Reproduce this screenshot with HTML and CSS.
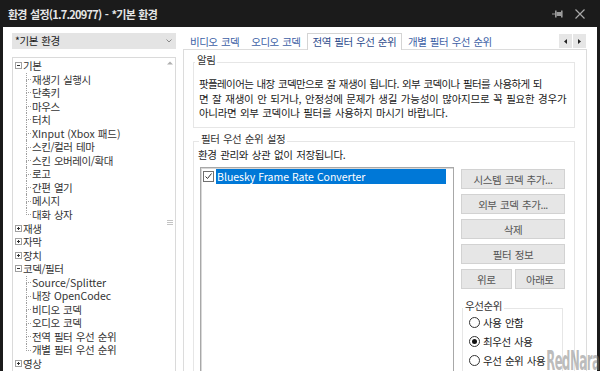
FILE: index.html
```html
<!DOCTYPE html>
<html lang="ko">
<head>
<meta charset="utf-8">
<title>환경 설정</title>
<link rel="stylesheet" href="styles.css">
</head>
<body>
<div class="window">
  <div class="titlebar">
    <span class="title">환경 설정(1.7.20977) - *기본 환경</span>
    <span class="tb-icons">
      <svg class="pin" width="11" height="8" viewBox="0 0 11 8"><path d="M0 4h3" stroke="#9a9a9a" stroke-width="1"/><rect x="3" y="0.5" width="1.6" height="7" fill="#9a9a9a"/><rect x="4.5" y="2" width="4.5" height="4" fill="#9a9a9a"/><rect x="9" y="0.5" width="1.6" height="7" fill="#9a9a9a"/></svg>
      <svg class="close" width="10" height="10" viewBox="0 0 10 10"><path d="M0.5 0.5L9.5 9.5M9.5 0.5L0.5 9.5" stroke="#a8a8a8" stroke-width="1.2"/></svg>
    </span>
  </div>
  <div class="client">
    <div class="left">
      <div class="combo"><span>*기본 환경</span><svg width="6" height="4" viewBox="0 0 6 4"><path d="M0.5 0.5L3 3L5.5 0.5" fill="none" stroke="#8a8a8a" stroke-width="1"/></svg></div>
      <div class="tree">
        <div class="tree-items">
          <div class="row root"><svg class="exp" width="7" height="7" viewBox="0 0 7 7"><rect x="0.5" y="0.5" width="6" height="6" fill="#fff" stroke="#a0a0a0"/><path d="M2 3.5h3" stroke="#333"/></svg><span class="rt">기본</span></div>
          <div class="row child"><span class="br"><i></i><i></i></span><span class="ct">재생기 실행시</span></div>
          <div class="row child"><span class="br"><i></i><i></i></span><span class="ct">단축키</span></div>
          <div class="row child"><span class="br"><i></i><i></i></span><span class="ct">마우스</span></div>
          <div class="row child"><span class="br"><i></i><i></i></span><span class="ct">터치</span></div>
          <div class="row child"><span class="br"><i></i><i></i></span><span class="ct lt">XInput (Xbox 패드)</span></div>
          <div class="row child"><span class="br"><i></i><i></i></span><span class="ct">스킨/컬러 테마</span></div>
          <div class="row child"><span class="br"><i></i><i></i></span><span class="ct">스킨 오버레이/확대</span></div>
          <div class="row child"><span class="br"><i></i><i></i></span><span class="ct">로고</span></div>
          <div class="row child"><span class="br"><i></i><i></i></span><span class="ct">간편 열기</span></div>
          <div class="row child"><span class="br"><i></i><i></i></span><span class="ct">메시지</span></div>
          <div class="row child last"><span class="br"><i></i><i></i></span><span class="ct">대화 상자</span></div>
          <div class="row root"><svg class="exp" width="7" height="7" viewBox="0 0 7 7"><rect x="0.5" y="0.5" width="6" height="6" fill="#fff" stroke="#a0a0a0"/><path d="M2 3.5h3M3.5 2v3" stroke="#333"/></svg><span class="rt">재생</span></div>
          <div class="row root"><svg class="exp" width="7" height="7" viewBox="0 0 7 7"><rect x="0.5" y="0.5" width="6" height="6" fill="#fff" stroke="#a0a0a0"/><path d="M2 3.5h3M3.5 2v3" stroke="#333"/></svg><span class="rt">자막</span></div>
          <div class="row root"><svg class="exp" width="7" height="7" viewBox="0 0 7 7"><rect x="0.5" y="0.5" width="6" height="6" fill="#fff" stroke="#a0a0a0"/><path d="M2 3.5h3M3.5 2v3" stroke="#333"/></svg><span class="rt">장치</span></div>
          <div class="row root"><svg class="exp" width="7" height="7" viewBox="0 0 7 7"><rect x="0.5" y="0.5" width="6" height="6" fill="#fff" stroke="#a0a0a0"/><path d="M2 3.5h3" stroke="#333"/></svg><span class="rt">코덱/필터</span></div>
          <div class="row child"><span class="br"><i></i><i></i></span><span class="ct lt">Source/Splitter</span></div>
          <div class="row child"><span class="br"><i></i><i></i></span><span class="ct">내장 <span class="lt">OpenCodec</span></span></div>
          <div class="row child"><span class="br"><i></i><i></i></span><span class="ct">비디오 코덱</span></div>
          <div class="row child"><span class="br"><i></i><i></i></span><span class="ct">오디오 코덱</span></div>
          <div class="row child"><span class="br"><i></i><i></i></span><span class="ct">전역 필터 우선 순위</span></div>
          <div class="row child last"><span class="br"><i></i><i></i></span><span class="ct">개별 필터 우선 순위</span></div>
          <div class="row root"><svg class="exp" width="7" height="7" viewBox="0 0 7 7"><rect x="0.5" y="0.5" width="6" height="6" fill="#fff" stroke="#a0a0a0"/><path d="M2 3.5h3M3.5 2v3" stroke="#333"/></svg><span class="rt">영상</span></div>
        </div>
        <div class="vscroll">
          <svg class="up" width="6" height="4" viewBox="0 0 6 4"><path d="M0 3.5L3 0.5L6 3.5Z" fill="#b0b0b0"/></svg>
          <svg class="grip" width="6" height="5" viewBox="0 0 6 5"><path d="M0 0.5h6M0 2.5h6M0 4.5h6" stroke="#c4c4c4"/></svg>
        </div>
      </div>
    </div>
    <div class="right">
      <div class="tabstrip">
        <span class="tab">비디오 코덱</span>
        <span class="tab">오디오 코덱</span>
        <span class="tab sel">전역 필터 우선 순위</span>
        <span class="tab">개별 필터 우선 순위</span>
        <span class="tabarrows">
          <span class="ta"><svg width="3" height="5" viewBox="0 0 3 5"><path d="M3 0L0 2.5L3 5Z" fill="#222"/></svg></span>
          <span class="ta"><svg width="3" height="5" viewBox="0 0 3 5"><path d="M0 0L3 2.5L0 5Z" fill="#222"/></svg></span>
        </span>
      </div>
      <div class="panel">
        <div class="group g1">
          <div class="glabel">알림</div>
          <p class="notice"><span class="l1">팟플레이어는 내장 코덱만으로 잘 재생이 됩니다. 외부 코덱이나 필터를 사용하게 되</span><br><span class="l2">면 잘 재생이 안 되거나, 안정성에 문제가 생길 가능성이 많아지므로 꼭 필요한 경우가</span><br><span class="l3">아니라면 외부 코덱이나 필터를 사용하지 마시기 바랍니다.</span></p>
        </div>
        <div class="group g2">
          <div class="glabel">필터 우선 순위 설정</div>
          <div class="desc">환경 관리와 상관 없이 저장됩니다.</div>
          <div class="g2row">
            <div class="list">
              <div class="item">
                <svg class="chk" width="11" height="11" viewBox="0 0 11 11"><rect x="0.5" y="0.5" width="10" height="10" fill="#fff" stroke="#707070"/><path d="M2.5 5.5L4.5 7.5L8.5 2.5" fill="none" stroke="#333" stroke-width="1"/></svg>
                <span class="sel-text lt">Bluesky Frame Rate Converter</span>
              </div>
            </div>
            <div class="btns">
              <button class="btn">시스템 코덱 추가...</button>
              <button class="btn">외부 코덱 추가...</button>
              <button class="btn">삭제</button>
              <button class="btn">필터 정보</button>
              <div class="btnpair"><button class="btn">위로</button><button class="btn">아래로</button></div>
              <div class="group g3">
                <div class="glabel">우선순위</div>
                <div class="radio"><span class="rb"></span><span>사용 안함</span></div>
                <div class="radio"><span class="rb on"></span><span>최우선 사용</span></div>
                <div class="radio"><span class="rb"></span><span>우선 순위 사용</span></div>
              </div>
            </div>
          </div>
        </div>
      </div>
    </div>
  </div>
  <div class="watermark">RedNara</div>
</div>
</body>
</html>
```
FILE: styles.css
```css
* { box-sizing: border-box; }
html, body { margin: 0; padding: 0; }
body {
  width: 600px;
  height: 371px;
  overflow: hidden;
  background: #1b1b1b;
  font-family: "Noto Sans CJK KR", "Noto Sans", sans-serif;
  font-size: 10.5px;
  letter-spacing: -0.45px;
  word-spacing: 1px;
  color: #1a1a1a;
}
.lt { letter-spacing: 0; word-spacing: 0; }
.window {
  position: relative;
  height: 371px;
  display: flex;
  flex-direction: column;
}
.titlebar {
  height: 27px;
  flex: none;
  display: flex;
  align-items: center;
  padding-left: 8px;
  color: #e6e6e6;
  font-weight: 700;
  font-size: 11px;
  letter-spacing: -0.75px;
}
.title { flex: 1; }
.tb-icons {
  display: flex;
  align-items: center;
  gap: 12px;
  padding-right: 15px;
}
.client {
  flex: 1;
  min-height: 0;
  margin: 0 3px;
  background: #fff;
  display: flex;
  align-items: flex-start;
  padding: 6px 0 0 9px;
  gap: 7px;
  overflow: hidden;
}
.left {
  width: 164px;
  flex: none;
  display: flex;
  flex-direction: column;
  gap: 8px;
}
.combo {
  height: 16px;
  background: #e4e4e4;
  display: flex;
  align-items: center;
  justify-content: space-between;
  padding: 0 4px 0 3px;
  line-height: 16px;
}
.tree {
  height: 330px;
  border: 1px solid #dadada;
  display: flex;
}
.tree-items { flex: 1; padding-top: 1px; }
.row {
  height: 13.55px;
  line-height: 13.55px;
  display: flex;
  align-items: center;
  white-space: nowrap;
  color: #333;
}
.exp { margin-left: 2px; flex: none; }
.rt { margin-left: 1px; }
.br {
  margin-left: 13px;
  width: 5px;
  height: 100%;
  display: flex;
  flex-direction: column;
  flex: none;
}
.br i { flex: 1; border-left: 1px dotted #a0a0a0; }
.br i:first-child { border-bottom: 1px dotted #a0a0a0; }
.last .br i:last-child { border-left: none; }
.ct { margin-left: 1px; }
.vscroll {
  width: 11px;
  display: flex;
  flex-direction: column;
  align-items: center;
}
.vscroll .up { margin-top: 3px; }
.vscroll .grip { margin-top: 155px; }

.right {
  width: 404px;
  flex: none;
  display: flex;
  flex-direction: column;
}
.tabstrip {
  height: 16px;
  display: flex;
  align-items: flex-end;
  padding-left: 1px;
  white-space: nowrap;
}
.tab {
  padding: 0 6px;
  line-height: 15px;
  color: #3d5fa6;
  letter-spacing: -0.5px;
}
.tab.sel {
  padding: 0 5px;
  border: 1px solid #d4d4d4;
  border-bottom: none;
  background: #fff;
  line-height: 16px;
  margin-bottom: -1px;
  position: relative;
  z-index: 1;
  color: #2d4b8c;
}
.tabarrows {
  margin-left: auto;
  margin-right: 1px;
  align-self: center;
  display: flex;
  gap: 1px;
}
.ta {
  width: 13px;
  height: 14px;
  background: #e6e6e6;
  display: flex;
  align-items: center;
  justify-content: center;
}
.panel {
  height: 330px;
  border: 1px solid #dcdcdc;
  padding: 12px 11px 0 9px;
}
.group {
  border: 1px solid #e6e6e6;
}
.glabel {
  width: fit-content;
  margin: -10px 0 0 1px;
  padding: 0 2px;
  background: #fff;
  line-height: 14px;
  color: #333;
}
.g1 { height: 66px; }
.notice {
  margin: 10px 0 0 5px;
  line-height: 14.5px;
  white-space: nowrap;
}
.l1 { letter-spacing: -0.62px; }
.l2 { letter-spacing: -0.24px; }
.l3 { letter-spacing: -0.32px; }
.g2 {
  margin-top: 13px;
  height: 240px;
  padding-left: 4px;
}
.desc {
  margin-top: 2px;
  line-height: 14px;
  letter-spacing: -0.35px;
}
.g2row {
  margin-top: 5px;
  margin-left: 2px;
  display: flex;
  gap: 7px;
  align-items: flex-start;
}
.list {
  width: 254px;
  height: 220px;
  border: 1px solid #a8a8a8;
  box-shadow: inset 1px 1px 0 #d8d8d8;
  padding: 1px 0 0 2px;
}
.item {
  display: flex;
  align-items: center;
  height: 15px;
}
.chk { flex: none; }
.sel-text {
  margin-left: 2px;
  width: 230px;
  height: 15px;
  line-height: 15px;
  background: #0078d7;
  color: #fff;
  padding-left: 1px;
}
.btns {
  width: 104px;
  margin-top: 2px;
  display: flex;
  flex-direction: column;
  gap: 5px;
}
.btn {
  height: 20px;
  background: #e6e6e6;
  border: 1px solid #d2d2d2;
  color: #555;
  font: inherit;
  letter-spacing: inherit;
  word-spacing: inherit;
  padding: 0;
  margin: 0;
}
.btnpair { display: flex; gap: 3px; }
.btnpair .btn { flex: 1; }
.g3 {
  margin-top: 14px;
  margin-left: 1px;
  width: 101px;
  height: 80px;
}
.g3 .glabel { margin-left: 0; }
.radio {
  height: 19px;
  display: flex;
  align-items: center;
  gap: 3px;
  padding-left: 6px;
}
.g3 .radio:first-of-type { margin-top: 2px; }
.rb {
  width: 11px;
  height: 11px;
  border: 1px solid #333;
  border-radius: 50%;
  background: #fff;
  display: flex;
  align-items: center;
  justify-content: center;
  flex: none;
}
.rb.on::after {
  content: "";
  width: 5px;
  height: 5px;
  border-radius: 50%;
  background: #111;
}
.watermark {
  position: absolute;
  right: 1px;
  bottom: -5px;
  font-family: "DejaVu Sans Condensed", "DejaVu Sans", sans-serif;
  font-weight: 700;
  font-size: 26px;
  letter-spacing: -1px;
  transform: scaleX(0.5);
  transform-origin: right bottom;
  color: rgba(130, 130, 130, 0.55);
  pointer-events: none;
}
```
